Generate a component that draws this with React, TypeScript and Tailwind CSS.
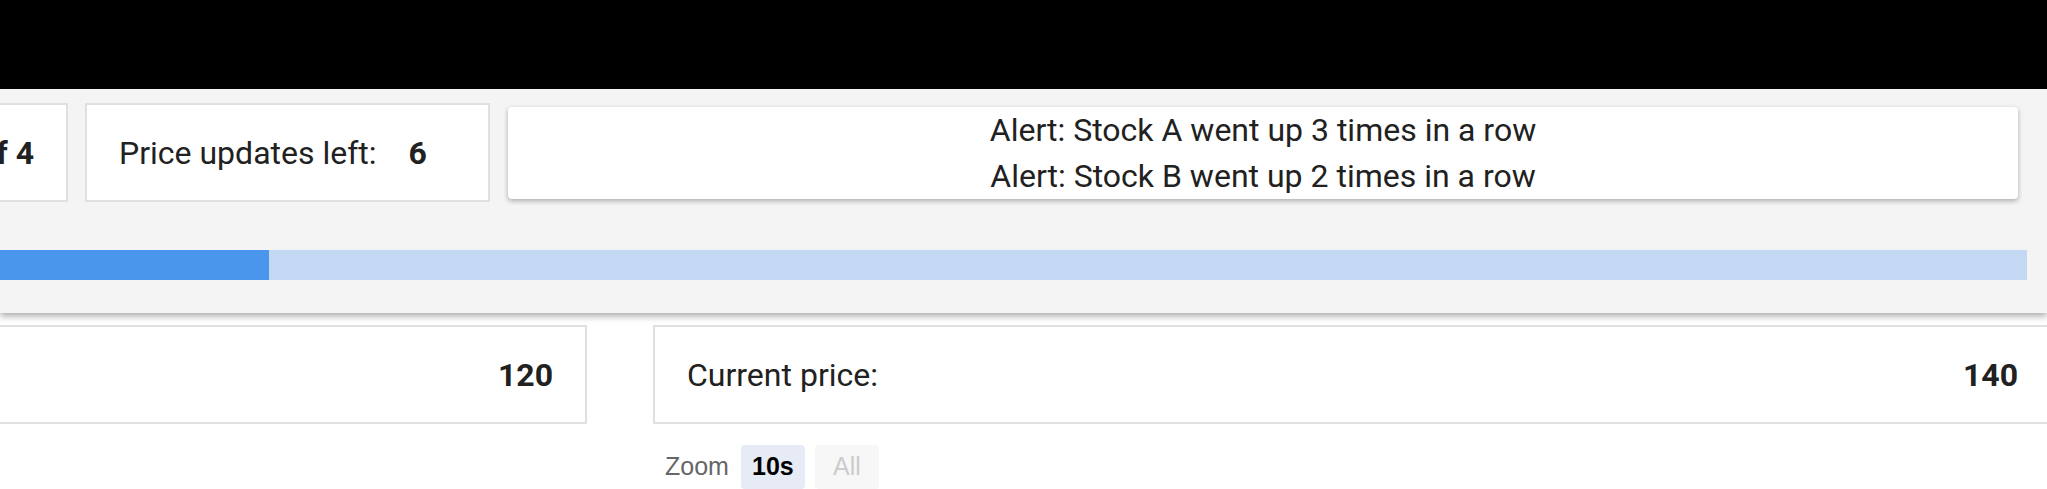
const updatesTotal = 8;
const updatesLeft = 6;

const alerts = [
  "Alert: Stock A went up 3 times in a row",
  "Alert: Stock B went up 2 times in a row",
];

function StatCard({
  label,
  value,
  className = "",
}: {
  label: string;
  value: string | number;
  className?: string;
}) {
  return (
    <div
      className={`flex h-[99px] shrink-0 items-center border-2 border-[#e0e0e0] bg-white px-[32px] ${className}`}
    >
      <span>{label}</span>
      <span className="ml-[32px] font-bold">{value}</span>
    </div>
  );
}

function PriceCard({ value }: { value: number }) {
  return (
    <div className="flex h-[99px] w-[1399px] shrink-0 items-center justify-between border-2 border-[#e0e0e0] bg-white px-[32px]">
      <span>Current price:</span>
      <span className="font-bold">{value}</span>
    </div>
  );
}

export default function App() {
  const progress = ((updatesTotal - updatesLeft) / updatesTotal) * 100;

  return (
    <div className="relative h-[489px] w-[2047px] overflow-hidden bg-white font-['Roboto',sans-serif] text-[32px] text-[#212121]">
      <div className="h-[89px] bg-black" />

      {/* control panel */}
      <div className="relative z-10 h-[224px] bg-[#f4f4f4] shadow-[0_3px_7px_rgba(0,0,0,0.35)]">
        <div className="ml-[-317px] flex w-[2344px] flex-col pt-[14px]">
          <div className="flex items-center">
            <StatCard label="Round:" value="1 of 4" className="w-[385px] justify-end" />
            <StatCard label="Price updates left:" value={updatesLeft} className="ml-[17px] w-[405px]" />
            <div className="ml-[18px] mr-[9px] flex h-[92px] flex-1 flex-col justify-center rounded-[4px] bg-white text-center leading-[46px] shadow-[0_2px_5px_rgba(0,0,0,0.3)]">
              {alerts.map((a) => (
                <div key={a}>{a}</div>
              ))}
            </div>
          </div>

          <div className="mt-[48px] h-[30px] bg-[#c3d8f2]">
            <div className="h-full bg-[#4a96ec]" style={{ width: `${progress}%` }} />
          </div>
        </div>
      </div>

      {/* stocks */}
      <div className="ml-[-812px] mt-[12px] flex gap-[66px]">
        <div className="flex w-[1399px] shrink-0 flex-col">
          <PriceCard value={120} />
        </div>
        <div className="flex w-[1399px] shrink-0 flex-col">
          <PriceCard value={140} />
          <div className="mt-[21px] flex items-center pl-[12px] font-['Liberation_Sans',Arial,sans-serif] text-[25px]">
            <span className="text-[#666666]">Zoom</span>
            <div className="ml-[12px] flex h-[44px] w-[64px] items-center justify-center rounded-[4px] bg-[#e6ebf5] font-bold text-black">
              10s
            </div>
            <div className="ml-[10px] flex h-[44px] w-[64px] items-center justify-center rounded-[4px] bg-[#f7f7f7] text-[#cccccc]">
              All
            </div>
          </div>
        </div>
      </div>
    </div>
  );
}
